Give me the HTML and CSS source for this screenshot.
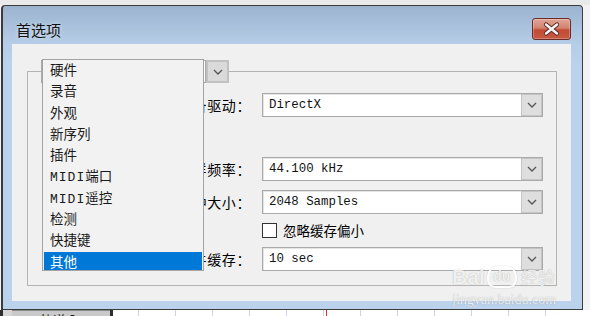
FILE: index.html
```html
<!DOCTYPE html>
<html lang="zh">
<head>
<meta charset="utf-8">
<title>首选项</title>
<link rel="stylesheet" href="styles.css">
</head>
<body>
<div class="window">
  <div class="titlebar">
    <span class="title">首选项</span>
    <div class="close">
      <svg width="37" height="20" viewBox="0 0 37 20">
        <path d="M13 5.5 L24 14.5 M24 5.5 L13 14.5" stroke="#5a2a24" stroke-width="4.2" stroke-linecap="round"/>
        <path d="M13 5.5 L24 14.5 M24 5.5 L13 14.5" stroke="#f4f4f4" stroke-width="2.4" stroke-linecap="round"/>
      </svg>
    </div>
  </div>
  <div class="client">
    <fieldset class="group">
      <legend class="legend">
        <div class="combo">
          <div class="combo-field"></div>
          <div class="ddbtn big"><svg width="10" height="6" viewBox="0 0 10 6"><polyline points="1,1 5,5 9,1" fill="none" stroke="#555" stroke-width="1.3"/></svg></div>
        </div>
        <ul class="list">
          <li>硬件</li>
          <li>录音</li>
          <li>外观</li>
          <li>新序列</li>
          <li>插件</li>
          <li><span class="lat">MIDI</span>端口</li>
          <li><span class="lat">MIDI</span>遥控</li>
          <li>检测</li>
          <li>快捷键</li>
          <li class="sel">其他</li>
        </ul>
      </legend>
      <div class="rows">
        <div class="label">设备驱动：</div>
        <div class="field"><span class="val">DirectX</span><span class="ddbtn"><svg width="10" height="6" viewBox="0 0 10 6"><polyline points="1,1 5,5 9,1" fill="none" stroke="#555" stroke-width="1.3"/></svg></span></div>
        <div class="spacer"></div>
        <div class="spacer"></div>
        <div class="label">采样频率：</div>
        <div class="field"><span class="val">44.100 kHz</span><span class="ddbtn"><svg width="10" height="6" viewBox="0 0 10 6"><polyline points="1,1 5,5 9,1" fill="none" stroke="#555" stroke-width="1.3"/></svg></span></div>
        <div class="label">缓冲大小：</div>
        <div class="field"><span class="val">2048 Samples</span><span class="ddbtn"><svg width="10" height="6" viewBox="0 0 10 6"><polyline points="1,1 5,5 9,1" fill="none" stroke="#555" stroke-width="1.3"/></svg></span></div>
        <div class="spacer"></div>
        <div class="check"><span class="box"></span><span class="check-label">忽略缓存偏小</span></div>
        <div class="label">文件缓存：</div>
        <div class="field"><span class="val">10 sec</span><span class="ddbtn"><svg width="10" height="6" viewBox="0 0 10 6"><polyline points="1,1 5,5 9,1" fill="none" stroke="#555" stroke-width="1.3"/></svg></span></div>
      </div>
    </fieldset>
  </div>
  <div class="watermark">
    <div class="wm-top"><span class="wm-bai">Bai</span><span class="wm-du">du</span><span class="wm-jy">经验</span></div>
    <div class="wm-url">jingyan.baidu.com</div>
  </div>
</div>
<div class="below">
  <div class="b-left"></div>
  <div class="b-btn"><span>轨道 3</span></div>
  <div class="b-sep"></div>
  <div class="b-grid"></div>
</div>
</body>
</html>
```
FILE: styles.css
```css
* { box-sizing: border-box; }
html, body { margin: 0; padding: 0; }
body {
  width: 590px;
  height: 316px;
  overflow: hidden;
  background: linear-gradient(#e9e9e9 0 5px, #f3f3f3 5px);
  font-family: "Noto Sans CJK SC", sans-serif;
  color: #000;
}
.window {
  position: relative;
  margin: 5px 0 0 1px;
  width: 582px;
  height: 305px;
  border: 1px solid #3b3b3b;
  border-left-width: 2px;
  border-radius: 4px 4px 0 0;
  background: linear-gradient(#9bb3cf 0, #a9c1dc 20px, #b6cde7 38px, #bbd2ec 60px, #bbd2ec);
  padding: 0 11px 8px 9px;
  display: flex;
  flex-direction: column;
}
.titlebar {
  height: 38px;
  display: flex;
  justify-content: space-between;
  align-items: flex-start;
}
.title {
  margin: 14px 0 0 4px;
  font-size: 15px;
  line-height: 20px;
  color: #111;
  text-shadow: 0 0 4px rgba(255,255,255,0.6);
}
.close {
  margin-top: 12px;
  width: 39px;
  height: 22px;
  border: 1px solid #6a2c27;
  border-radius: 3px;
  background: linear-gradient(#e1a597 0, #d4826f 45%, #c24a36 55%, #c75a40 100%);
  box-shadow: inset 0 0 0 1px rgba(255,255,255,0.25);
  display: flex;
  align-items: center;
  justify-content: center;
}
.client {
  flex: 1;
  background: #f0f0f0;
  padding: 16px 14px 15px 15px;
  display: flex;
}
.group {
  flex: 1;
  min-width: 0;
  margin: 0;
  padding: 0;
  border: 1px solid #b4b4b4;
}
.legend {
  position: relative;
  padding: 0;
  margin-left: 13px;
}
.combo {
  width: 188px;
  height: 23px;
  display: flex;
}
.combo-field {
  flex: 1;
  background: #fff;
  border: 1px solid #a9a9a9;
}
.ddbtn {
  width: 21px;
  background: #dedede;
  border: 1px solid #c4c4c4;
  display: flex;
  align-items: center;
  justify-content: center;
}
.ddbtn.big {
  width: 23px;
  border: 2px solid #c1c1c1;
  background: #dadada;
}
.list {
  position: absolute;
  left: 1px;
  top: -1px;
  width: 162px;
  margin: 0;
  padding: 0;
  list-style: none;
  background: #f2f2f2;
  border: 1px solid #a3a3a3;
  z-index: 2;
}
.list li {
  height: 21.3px;
  margin: 0 1px;
  font-size: 13.5px;
  line-height: 18px;
  text-indent: 6px;
  color: #1a1a1a;
}
.list li.sel {
  height: 18px;
  background-color: #0078d7;
  color: #fff;
}
.lat {
  font-family: "Liberation Mono", monospace;
  font-size: 13px;
  letter-spacing: 1px;
}
.rows {
  margin-top: 10px;
  display: grid;
  grid-template-columns: 223px 281px;
  grid-template-rows: 24px 22px 24px 24px 15px 24px;
  column-gap: 11px;
  row-gap: 9px;
}
.label {
  text-align: right;
  font-size: 14px;
  letter-spacing: 0.6px;
  line-height: 24px;
  white-space: nowrap;
}
.field {
  display: flex;
  background: #fff;
  border: 1px solid #aaaaaa;
  box-shadow: inset 1px 1px 0 #e4e4e4;
}
.val {
  flex: 1;
  padding-left: 6px;
  font-family: "Liberation Mono", monospace;
  font-size: 12.4px;
  line-height: 22px;
  color: #111;
}
.check {
  display: flex;
  align-items: center;
  gap: 6px;
}
.box {
  width: 15px;
  height: 15px;
  background: #fff;
  border: 1px solid #333;
}
.check-label {
  font-size: 13.5px;
  line-height: 15px;
}
.watermark {
  position: absolute;
  left: 449px;
  top: 250px;
  width: 112px;
  color: rgba(255,255,255,0.85);
  text-shadow: 0 0 1px rgba(0,0,0,0.35);
  font-family: "Liberation Sans", sans-serif;
}
.wm-top {
  display: flex;
  align-items: flex-end;
  height: 32px;
}
.wm-bai {
  font-size: 21px;
  font-weight: bold;
  line-height: 22px;
}
.wm-du {
  margin-left: 2px;
  width: 30px;
  height: 22px;
  border-radius: 10px 10px 8px 8px;
  border: 2px solid rgba(255,255,255,0.85);
  box-shadow: 0 0 1px rgba(0,0,0,0.35);
  font-size: 14px;
  font-weight: bold;
  line-height: 17px;
  text-align: center;
}
.wm-jy {
  margin-left: 4px;
  font-family: "Noto Sans CJK SC", sans-serif;
  font-size: 17px;
  line-height: 22px;
}
.wm-url {
  margin-top: 4px;
  font-family: "Liberation Serif", serif;
  font-size: 14px;
  line-height: 16px;
}
.below {
  height: 6px;
  display: flex;
  background: #fff;
}
.b-left {
  width: 12px;
  background: #d6d6d6;
  border-left: 3px solid #2e2e2e;
}
.b-btn {
  width: 98px;
  background: #c9c9c9;
  border-top: 1px solid #8a8a8a;
  overflow: hidden;
}
.b-btn span {
  display: block;
  margin: 1px 0 0 28px;
  font-size: 13px;
  line-height: 16px;
  color: #111;
}
.b-sep {
  width: 3px;
  background: #2e2e2e;
}
.b-grid {
  flex: 1;
  background:
    linear-gradient(90deg, transparent 213px, #e03030 213px, #e03030 214px, transparent 214px),
    repeating-linear-gradient(90deg, transparent 0 36px, #cfd2f2 36px 37px);
  background-position: 0 0, -11px 0;
}
```
